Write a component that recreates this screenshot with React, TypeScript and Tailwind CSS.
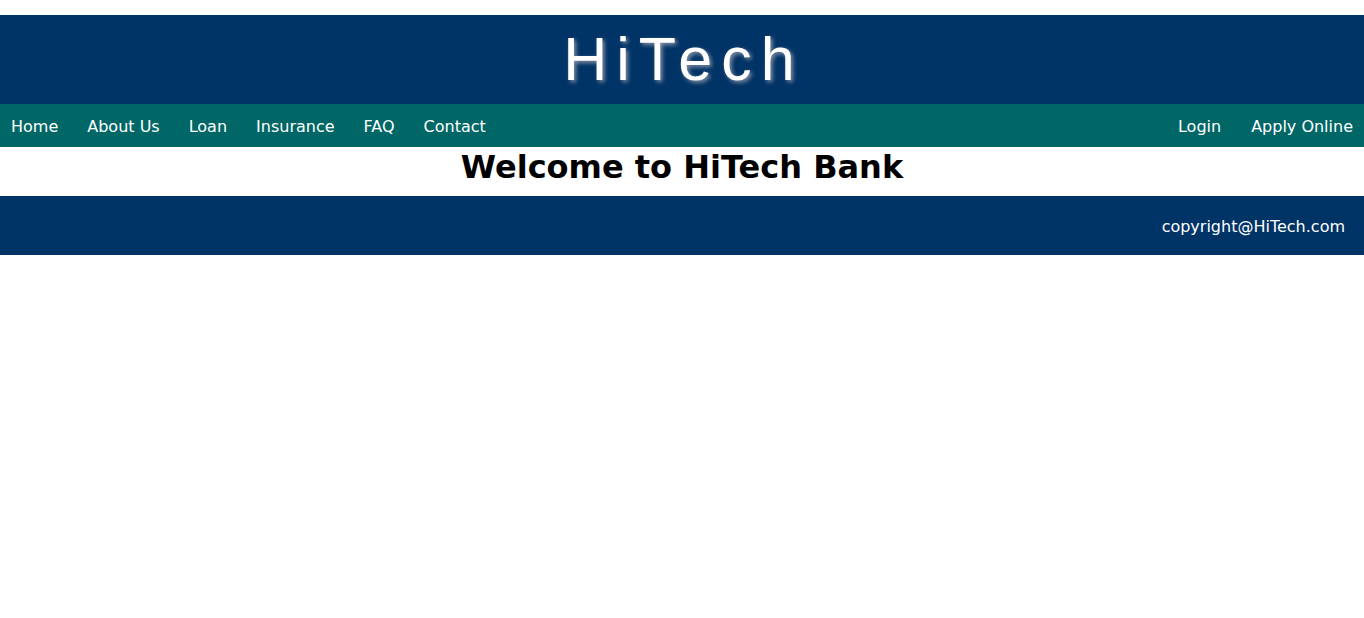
const navLeft = ["Home", "About Us", "Loan", "Insurance", "FAQ", "Contact"];
const navRight = ["Login", "Apply Online"];

export default function App() {
  return (
    <div className="min-h-screen bg-white pt-[15px] font-['DejaVu_Sans',Verdana,sans-serif]">
      <header className="flex h-[89px] items-center justify-center bg-[#003366]">
        <h2 className="pl-[3px] font-['Liberation_Sans',Arial,sans-serif] text-[61px] leading-none tracking-[9px] text-white [text-shadow:2px_2px_4px_#8a94a6]">
          HiTech
        </h2>
      </header>
      <nav className="flex h-[43px] items-center justify-between bg-[#006666] px-[11px] pt-[2px] text-[16px] text-white">
        <ul className="flex gap-[29px]">
          {navLeft.map((item) => (
            <li key={item}>
              <a href="#">{item}</a>
            </li>
          ))}
        </ul>
        <ul className="flex gap-[30px]">
          {navRight.map((item) => (
            <li key={item}>
              <a href="#">{item}</a>
            </li>
          ))}
        </ul>
      </nav>
      <main className="flex h-[49px] items-start justify-center pt-[1px]">
        <h1 className="text-[32px] font-bold leading-[38px] text-black">Welcome to HiTech Bank</h1>
      </main>
      <footer className="flex h-[59px] items-center justify-end bg-[#003366] pr-[19px] pt-[2px] text-[16px] text-white">
        copyright@HiTech.com
      </footer>
    </div>
  );
}
